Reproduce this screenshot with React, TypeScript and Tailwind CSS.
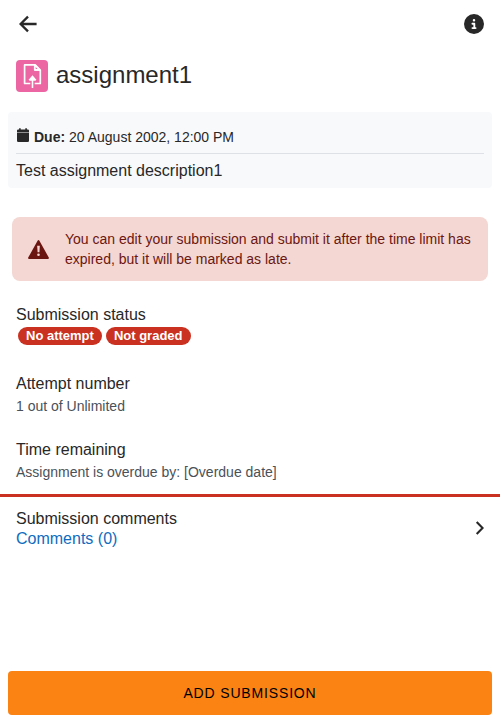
import { FaCircleInfo } from "react-icons/fa6";

function ArrowIcon() {
  return (
    <svg viewBox="0 0 18 18" className="h-[18px] w-[18px]" fill="none" stroke="currentColor" strokeWidth="2.3">
      <path d="M9 1.6L1.6 9L9 16.4M2 9H17.6" />
    </svg>
  );
}

function CalendarIcon() {
  return (
    <svg viewBox="0 0 14 14" className="mr-1 h-[14px] w-[14px]" fill="currentColor">
      <path d="M1 4V2.6Q1 1.4 2.2 1.4H3.1V0.2H4.7V1.4H9.3V0.2H10.9V1.4H11.8Q13 1.4 13 2.6V4Z" />
      <path d="M1 5H13V12.7Q13 14 11.7 14H2.3Q1 14 1 12.7Z" />
      <path d="M1 4H13V5H1Z" opacity="0.5" />
    </svg>
  );
}

function WarningIcon() {
  return (
    <svg viewBox="0 0 21 19" className="h-[19px] w-[21px]">
      <path d="M10.5 1L20 18H1Z" fill="currentColor" stroke="currentColor" strokeWidth="1.8" strokeLinejoin="round" />
      <path d="M9.2 5.8H11.8L11.4 12.2H9.6Z" fill="#f4d6d2" />
      <circle cx="10.5" cy="14.7" r="1.3" fill="#f4d6d2" />
    </svg>
  );
}

function ChevronIcon() {
  return (
    <svg viewBox="0 0 10 16" className="h-4 w-2.5" fill="none" stroke="currentColor" strokeWidth="2.1">
      <path d="M2.7 1.9L8.6 8L2.7 14.1" />
    </svg>
  );
}

function AssignmentIcon() {
  return (
    <div className="flex h-8 w-8 shrink-0 items-center justify-center rounded bg-[#eb66a2]">
      <svg viewBox="0 0 24 24" className="h-6 w-6" fill="none">
        <path d="M10.3 19.5H4.6V0.9H15.2L20.3 6V19.5H14.7" stroke="#fff" strokeWidth="1.7" strokeLinejoin="round" />
        <path d="M14.4 0.9V6.4H20.3L15.2 0.9Z" fill="#fff" stroke="#fff" strokeWidth="1" strokeLinejoin="round" />
        <path d="M15.7 3.1V5H17.6Z" fill="#eb66a2" />
        <path d="M12.5 24V14" stroke="#fff" strokeWidth="1.6" />
        <path d="M12.5 11.3L15.9 15.2Q16.4 16.8 15 16.8H10Q8.6 16.8 9.1 15.2Z" fill="#fff" />
      </svg>
    </div>
  );
}

function Badge({ children }: { children: string }) {
  return (
    <span className="flex h-[18px] items-center rounded-full bg-[#ca3120] px-2 text-[13px] font-bold leading-[18px] text-white">
      {children}
    </span>
  );
}

function Detail({ title, value }: { title: string; value: string }) {
  return (
    <div>
      <h2 className="text-base leading-5">{title}</h2>
      <p className="mt-0.5 text-sm leading-5 text-[#4a5158]">{value}</p>
    </div>
  );
}

export default function App() {
  return (
    <div className="flex h-[720px] w-[500px] flex-col overflow-hidden bg-white font-['Liberation_Sans',Arial,sans-serif] text-[#282828]">
      <header className="flex h-12 shrink-0 items-center justify-between pl-[19px] pr-4">
        <ArrowIcon />
        <FaCircleInfo className="h-5 w-5" />
      </header>

      <div className="mt-3 flex h-8 shrink-0 items-center gap-2 px-4">
        <AssignmentIcon />
        <h1 className="-mt-0.5 text-2xl leading-8">assignment1</h1>
      </div>

      <section className="mx-2 mt-5 h-[76px] shrink-0 rounded-sm bg-[#f8f9fb] px-2">
        <div className="flex h-[42px] border-b border-[#dee2e6] pt-4 text-sm leading-[18px]">
          <CalendarIcon />
          <span>
            <strong>Due:</strong> 20 August 2002, 12:00 PM
          </span>
        </div>
        <p className="pt-[7px] text-base leading-5">Test assignment description1</p>
      </section>

      <section className="mx-3 mt-[29px] flex h-16 shrink-0 items-center rounded-lg bg-[#f4d6d2] pl-4 text-[#6b1611]">
        <WarningIcon />
        <p className="ml-4 w-[412px] text-sm leading-5">
          You can edit your submission and submit it after the time limit has expired, but it will be marked as late.
        </p>
      </section>

      <section className="mt-6 shrink-0 px-4">
        <h2 className="text-base leading-5">Submission status</h2>
        <div className="ml-0.5 mt-0.5 flex gap-1">
          <Badge>No attempt</Badge>
          <Badge>Not graded</Badge>
        </div>
      </section>

      <section className="mt-[29px] flex shrink-0 flex-col gap-6 border-b-[3px] border-[#ca3120] px-4 pb-3">
        <Detail title="Attempt number" value="1 out of Unlimited" />
        <Detail title="Time remaining" value="Assignment is overdue by: [Overdue date]" />
      </section>

      <section className="flex h-[62px] shrink-0 items-center justify-between px-4">
        <div className="pt-px text-base leading-5">
          <h2>Submission comments</h2>
          <p className="text-[#0f6cbf]">Comments (0)</p>
        </div>
        <ChevronIcon />
      </section>

      <button className="mx-2 mb-[5px] mt-auto h-11 shrink-0 rounded bg-[#fa8314] text-sm tracking-[0.84px] text-black">
        ADD SUBMISSION
      </button>
    </div>
  );
}
